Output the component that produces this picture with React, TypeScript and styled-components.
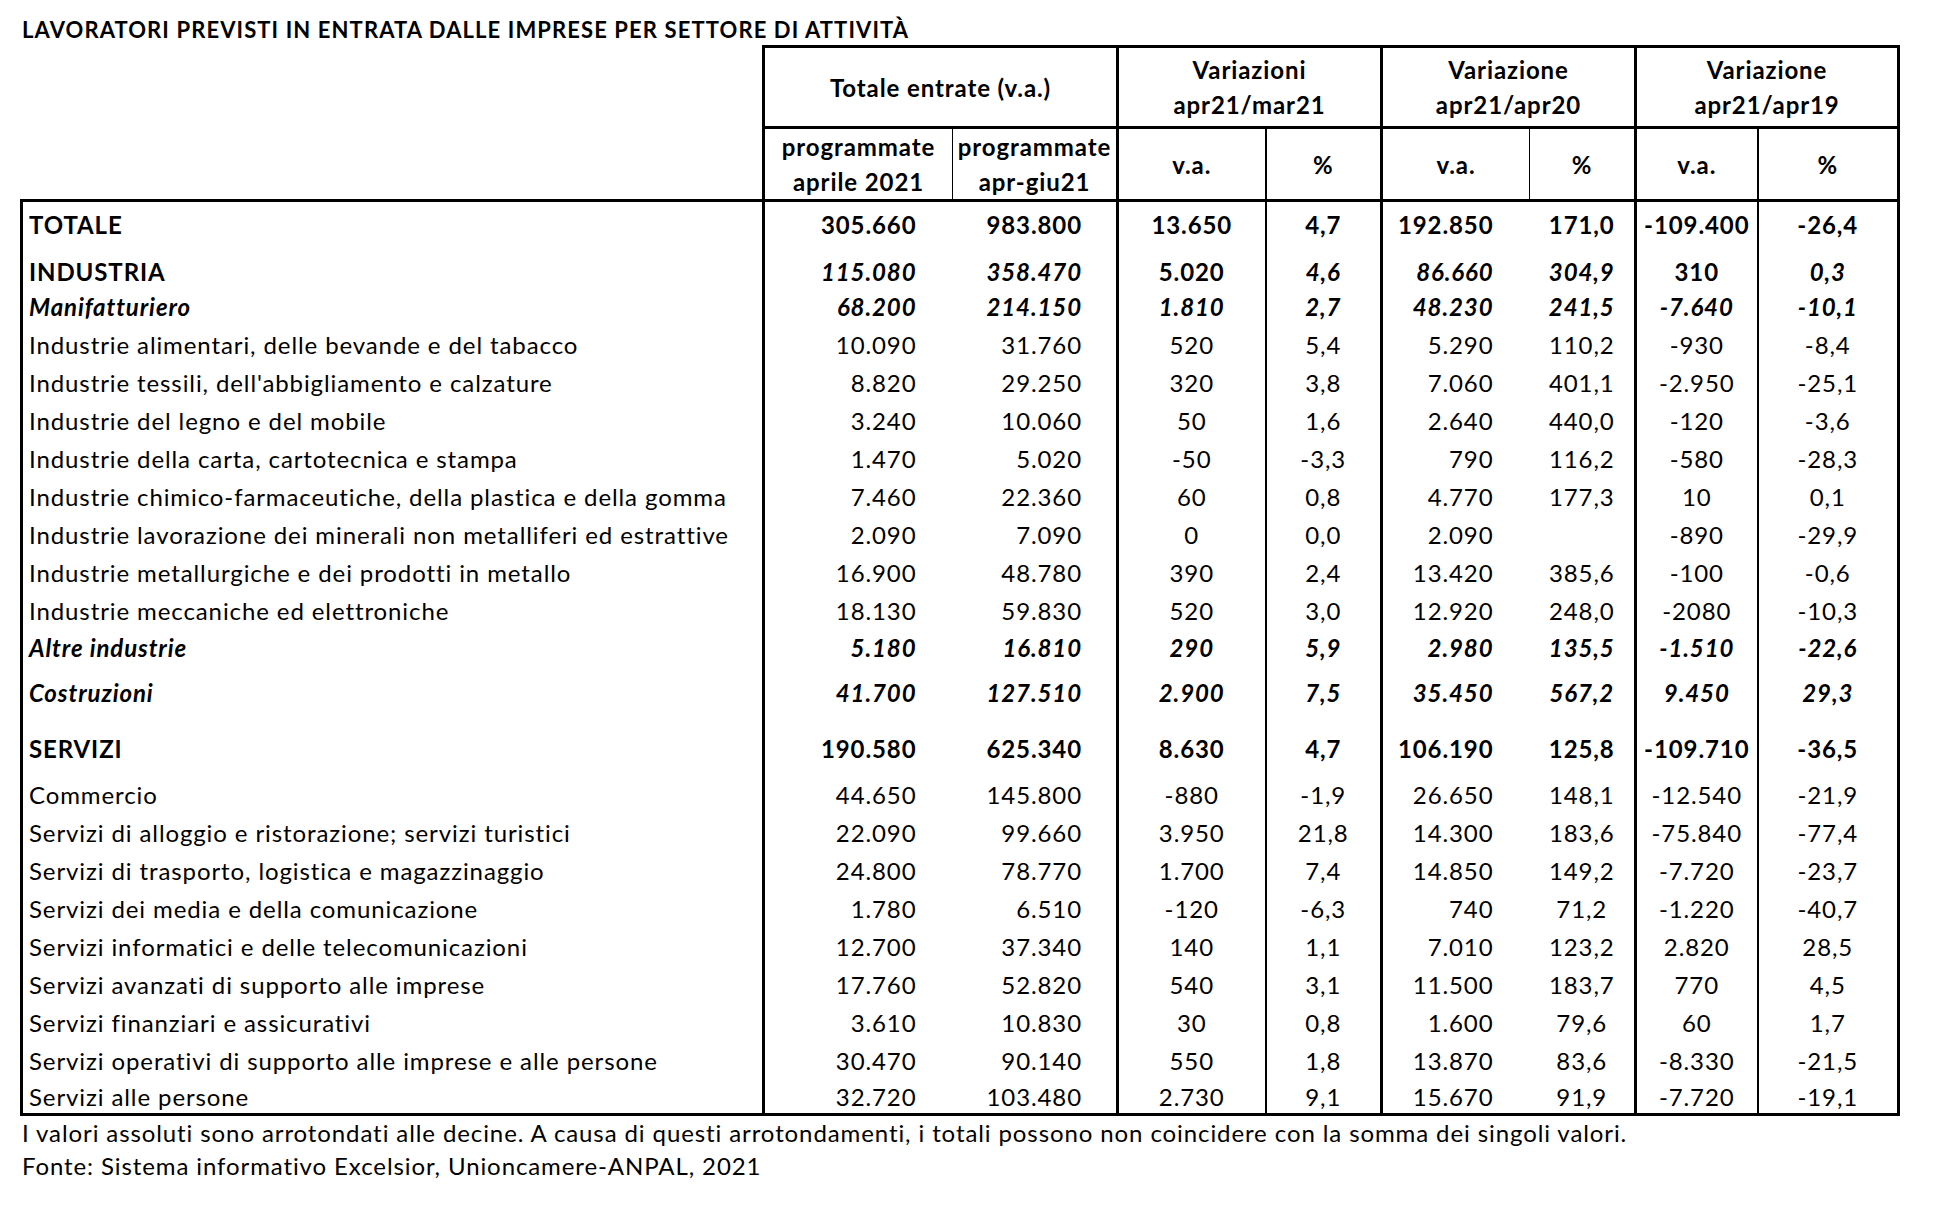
import React from 'react';
import styled, { createGlobalStyle, css } from 'styled-components';

type Weight = 'r' | 'b' | 'bi';
type Edge = 'thick' | 'med' | 'thin' | 'none';
type Align = 'right' | 'center';

const EDGE: Record<Edge, number> = { thick: 3, med: 2, thin: 1, none: 0 };

const GlobalStyle = createGlobalStyle`
  html, body { margin: 0; padding: 0; background: #ffffff; }
  body {
    font-family: Lato, "Liberation Sans", sans-serif;
    color: #000000;
  }
`;

const weightCss = (w: Weight) =>
  w === 'r'
    ? css`font-weight: 400; font-style: normal;`
    : w === 'b'
    ? css`font-weight: 700; font-style: normal;`
    : css`font-weight: 700; font-style: italic;`;

const Page = styled.div`
  padding: 17px 0 40px 20px;
`;

const Title = styled.h1`
  margin: 0 0 2px 2px;
  font-size: 22px;
  line-height: 26px;
  letter-spacing: 1.1px;
  font-weight: 700;
  white-space: nowrap;
`;

const DataTable = styled.table`
  border-collapse: collapse;
  table-layout: fixed;
  width: 1880px;
  font-size: 24px;
  letter-spacing: 0.9px;
`;

const Col = styled.col<{ $w: number }>`
  width: ${p => p.$w}px;
`;

const HeadRow = styled.tr<{ $h: number }>`
  height: ${p => p.$h}px;
`;

const Corner = styled.th`
  padding: 0;
  border: none;
`;

const HeadCell = styled.th<{ $left: Edge; $right?: boolean }>`
  padding: 0;
  font-weight: 700;
  text-align: center;
  vertical-align: middle;
  line-height: 35px;
  white-space: nowrap;
  border-top: 3px solid #000;
  border-bottom: 3px solid #000;
  border-left: ${p => EDGE[p.$left]}px solid #000;
  border-right: ${p => (p.$right ? 3 : 0)}px solid #000;
`;

const BodyRow = styled.tr<{ $h: number }>`
  height: ${p => p.$h}px;
`;

const cellEdges = css<{ $first?: boolean; $last?: boolean }>`
  border-top: ${p => (p.$first ? 3 : 0)}px solid #000;
  border-bottom: ${p => (p.$last ? 3 : 0)}px solid #000;
`;

const Label = styled.td<{ $w: Weight; $first?: boolean; $last?: boolean }>`
  padding: 0 0 3px 6px;
  text-align: left;
  vertical-align: bottom;
  line-height: 26px;
  white-space: nowrap;
  border-left: 3px solid #000;
  ${cellEdges}
  ${p => weightCss(p.$w)}
`;

const Num = styled.td<{
  $w: Weight;
  $left: Edge;
  $align: Align;
  $pr: number;
  $right?: boolean;
  $first?: boolean;
  $last?: boolean;
}>`
  padding: 0 ${p => p.$pr}px 3px 0;
  text-align: ${p => p.$align};
  vertical-align: bottom;
  line-height: 26px;
  white-space: nowrap;
  border-left: ${p => EDGE[p.$left]}px solid #000;
  border-right: ${p => (p.$right ? 3 : 0)}px solid #000;
  ${cellEdges}
  ${p => weightCss(p.$w)}
`;

const Notes = styled.div`
  margin: 0 0 0 2px;
  font-size: 24px;
  line-height: 33px;
  letter-spacing: 0.9px;
  white-space: nowrap;
`;

const COL_WIDTHS = [742, 189, 165, 148, 116, 148, 106, 122, 141];

const BODY_COLS: { left: Edge; align: Align; pr: number }[] = [
  { left: 'thick', align: 'right', pr: 36 },
  { left: 'none', align: 'right', pr: 34 },
  { left: 'thick', align: 'center', pr: 0 },
  { left: 'med', align: 'center', pr: 0 },
  { left: 'thick', align: 'right', pr: 36 },
  { left: 'none', align: 'center', pr: 0 },
  { left: 'thick', align: 'center', pr: 0 },
  { left: 'med', align: 'center', pr: 0 },
];

const SUB_HEAD: { text: React.ReactNode; left: Edge }[] = [
  { text: <>programmate<br />aprile 2021</>, left: 'thick' },
  { text: <>programmate<br />apr-giu21</>, left: 'thin' },
  { text: 'v.a.', left: 'thick' },
  { text: '%', left: 'med' },
  { text: 'v.a.', left: 'thick' },
  { text: '%', left: 'thin' },
  { text: 'v.a.', left: 'thick' },
  { text: '%', left: 'med' },
];

type RowData = {
  label: string;
  lw: Weight;
  vals: string[];
  vw: Weight | Weight[];
  h: number;
};

const ROWS: RowData[] = [
  { label: 'TOTALE', lw: 'b', vw: 'b', h: 40, vals: ['305.660', '983.800', '13.650', '4,7', '192.850', '171,0', '-109.400', '-26,4'] },
  { label: 'INDUSTRIA', lw: 'b', vw: ['bi', 'bi', 'b', 'bi', 'bi', 'bi', 'b', 'bi'], h: 47, vals: ['115.080', '358.470', '5.020', '4,6', '86.660', '304,9', '310', '0,3'] },
  { label: 'Manifatturiero', lw: 'bi', vw: 'bi', h: 35, vals: ['68.200', '214.150', '1.810', '2,7', '48.230', '241,5', '-7.640', '-10,1'] },
  { label: 'Industrie alimentari, delle bevande e del tabacco', lw: 'r', vw: 'r', h: 38, vals: ['10.090', '31.760', '520', '5,4', '5.290', '110,2', '-930', '-8,4'] },
  { label: "Industrie tessili, dell'abbigliamento e calzature", lw: 'r', vw: 'r', h: 38, vals: ['8.820', '29.250', '320', '3,8', '7.060', '401,1', '-2.950', '-25,1'] },
  { label: 'Industrie del legno e del mobile', lw: 'r', vw: 'r', h: 38, vals: ['3.240', '10.060', '50', '1,6', '2.640', '440,0', '-120', '-3,6'] },
  { label: 'Industrie della carta, cartotecnica e stampa', lw: 'r', vw: 'r', h: 38, vals: ['1.470', '5.020', '-50', '-3,3', '790', '116,2', '-580', '-28,3'] },
  { label: 'Industrie chimico-farmaceutiche, della plastica e della gomma', lw: 'r', vw: 'r', h: 38, vals: ['7.460', '22.360', '60', '0,8', '4.770', '177,3', '10', '0,1'] },
  { label: 'Industrie lavorazione dei minerali non metalliferi ed estrattive', lw: 'r', vw: 'r', h: 38, vals: ['2.090', '7.090', '0', '0,0', '2.090', '', '-890', '-29,9'] },
  { label: 'Industrie metallurgiche e dei prodotti in metallo', lw: 'r', vw: 'r', h: 38, vals: ['16.900', '48.780', '390', '2,4', '13.420', '385,6', '-100', '-0,6'] },
  { label: 'Industrie meccaniche ed elettroniche', lw: 'r', vw: 'r', h: 38, vals: ['18.130', '59.830', '520', '3,0', '12.920', '248,0', '-2080', '-10,3'] },
  { label: 'Altre industrie', lw: 'bi', vw: 'bi', h: 37, vals: ['5.180', '16.810', '290', '5,9', '2.980', '135,5', '-1.510', '-22,6'] },
  { label: 'Costruzioni', lw: 'bi', vw: 'bi', h: 45, vals: ['41.700', '127.510', '2.900', '7,5', '35.450', '567,2', '9.450', '29,3'] },
  { label: 'SERVIZI', lw: 'b', vw: 'b', h: 56, vals: ['190.580', '625.340', '8.630', '4,7', '106.190', '125,8', '-109.710', '-36,5'] },
  { label: 'Commercio', lw: 'r', vw: 'r', h: 46, vals: ['44.650', '145.800', '-880', '-1,9', '26.650', '148,1', '-12.540', '-21,9'] },
  { label: 'Servizi di alloggio e ristorazione; servizi turistici', lw: 'r', vw: 'r', h: 38, vals: ['22.090', '99.660', '3.950', '21,8', '14.300', '183,6', '-75.840', '-77,4'] },
  { label: 'Servizi di trasporto, logistica e magazzinaggio', lw: 'r', vw: 'r', h: 38, vals: ['24.800', '78.770', '1.700', '7,4', '14.850', '149,2', '-7.720', '-23,7'] },
  { label: 'Servizi dei media e della comunicazione', lw: 'r', vw: 'r', h: 38, vals: ['1.780', '6.510', '-120', '-6,3', '740', '71,2', '-1.220', '-40,7'] },
  { label: 'Servizi informatici e delle telecomunicazioni', lw: 'r', vw: 'r', h: 38, vals: ['12.700', '37.340', '140', '1,1', '7.010', '123,2', '2.820', '28,5'] },
  { label: 'Servizi avanzati di supporto alle imprese', lw: 'r', vw: 'r', h: 38, vals: ['17.760', '52.820', '540', '3,1', '11.500', '183,7', '770', '4,5'] },
  { label: 'Servizi finanziari e assicurativi', lw: 'r', vw: 'r', h: 38, vals: ['3.610', '10.830', '30', '0,8', '1.600', '79,6', '60', '1,7'] },
  { label: 'Servizi operativi di supporto alle imprese e alle persone', lw: 'r', vw: 'r', h: 38, vals: ['30.470', '90.140', '550', '1,8', '13.870', '83,6', '-8.330', '-21,5'] },
  { label: 'Servizi alle persone', lw: 'r', vw: 'r', h: 38, vals: ['32.720', '103.480', '2.730', '9,1', '15.670', '91,9', '-7.720', '-19,1'] },
];

export default function App() {
  const lastIndex = ROWS.length - 1;
  return (
    <>
      <GlobalStyle />
      <Page>
        <Title>LAVORATORI PREVISTI IN ENTRATA DALLE IMPRESE PER SETTORE DI ATTIVITÀ</Title>
        <DataTable>
          <colgroup>
            {COL_WIDTHS.map((w, i) => (
              <Col key={i} $w={w} />
            ))}
          </colgroup>
          <thead>
            <HeadRow $h={81}>
              <Corner rowSpan={2} />
              <HeadCell colSpan={2} $left="thick">Totale entrate (v.a.)</HeadCell>
              <HeadCell colSpan={2} $left="thick">Variazioni<br />apr21/mar21</HeadCell>
              <HeadCell colSpan={2} $left="thick">Variazione<br />apr21/apr20</HeadCell>
              <HeadCell colSpan={2} $left="thick" $right>Variazione<br />apr21/apr19</HeadCell>
            </HeadRow>
            <HeadRow $h={72}>
              {SUB_HEAD.map((s, i) => (
                <HeadCell key={i} $left={s.left} $right={i === SUB_HEAD.length - 1}>
                  {s.text}
                </HeadCell>
              ))}
            </HeadRow>
          </thead>
          <tbody>
            {ROWS.map((r, ri) => (
              <BodyRow key={ri} $h={r.h}>
                <Label $w={r.lw} $first={ri === 0} $last={ri === lastIndex}>
                  {r.label}
                </Label>
                {r.vals.map((v, ci) => {
                  const c = BODY_COLS[ci];
                  const w = Array.isArray(r.vw) ? r.vw[ci] : r.vw;
                  return (
                    <Num
                      key={ci}
                      $w={w}
                      $left={c.left}
                      $align={c.align}
                      $pr={c.pr}
                      $right={ci === BODY_COLS.length - 1}
                      $first={ri === 0}
                      $last={ri === lastIndex}
                    >
                      {v}
                    </Num>
                  );
                })}
              </BodyRow>
            ))}
          </tbody>
        </DataTable>
        <Notes>
          I valori assoluti sono arrotondati alle decine. A causa di questi arrotondamenti, i totali possono non coincidere con la somma dei singoli valori.
          <br />
          Fonte: Sistema informativo Excelsior, Unioncamere-ANPAL, 2021
        </Notes>
      </Page>
    </>
  );
}
